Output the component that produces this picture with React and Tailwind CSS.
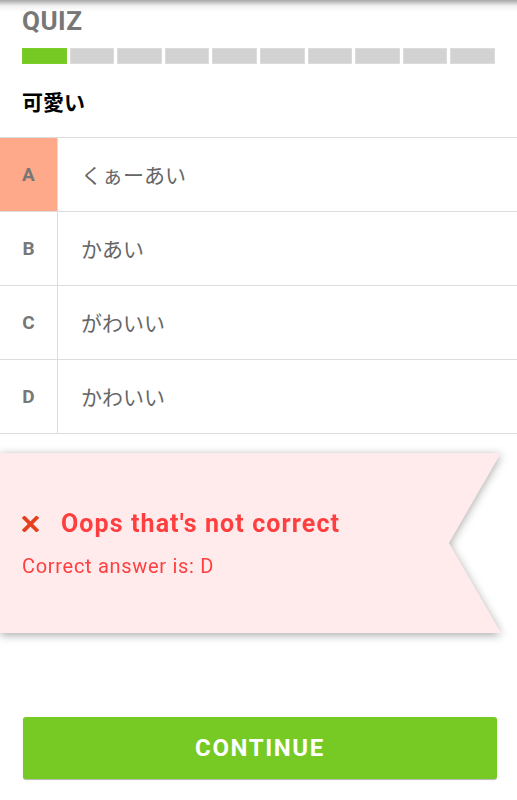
const segments = Array.from({ length: 10 }, (_, i) => i)

const answers = [
  { key: 'A', text: 'くぁーあい', picked: true },
  { key: 'B', text: 'かあい' },
  { key: 'C', text: 'がわいい' },
  { key: 'D', text: 'かわいい' },
]

const latin = { fontFamily: 'Roboto, "Noto Sans CJK JP", sans-serif' }
const jp = { fontFamily: '"Noto Sans CJK JP", Roboto, sans-serif' }

export default function App() {
  return (
    <div className="relative min-h-[800px] w-full overflow-hidden bg-white" style={latin}>
      {/* toolbar shadow on top edge */}
      <div className="pointer-events-none absolute inset-x-0 top-0 h-[12px] bg-gradient-to-b from-[#a8a8a8] via-[#f2f2f2] to-transparent" />

      <header className="px-[22px] pt-[8px]">
        <h1 className="text-[26px] font-bold leading-[26px] tracking-[0.5px] text-[#777777]">QUIZ</h1>
        <div className="mt-[14px] flex gap-[3px]">
          {segments.map((i) => (
            <div
              key={i}
              className={`h-[16px] w-[45px] border ${
                i === 0 ? 'border-[#7ccb2a] bg-[#76c922]' : 'border-[#dcdcdc] bg-[#d2d2d2]'
              }`}
            />
          ))}
        </div>
        <p className="mt-[27px] mb-[25px] text-[21px] font-bold leading-[21px] text-black" style={jp}>
          可愛い
        </p>
      </header>

      <ul className="border-t border-[#dddddd]">
        {answers.map((a) => (
          <li key={a.key} className="flex h-[74px] border-b border-[#dddddd]">
            <div
              className={`flex w-[58px] shrink-0 items-center justify-center border-r border-[#dddddd] pt-[2px] text-[19px] font-bold text-[#777777] ${
                a.picked ? 'bg-[#ffa98b]' : ''
              }`}
            >
              {a.key}
            </div>
            <div className="flex items-center pl-[23px] text-[21px] text-[#666666]" style={jp}>
              {a.text}
            </div>
          </li>
        ))}
      </ul>

      <div className="mt-[19px] w-[501px] drop-shadow-[0_2px_5px_rgba(0,0,0,0.35)]">
        <div className="h-[180px] bg-[#ffebeb] px-[22px] pt-[58px] [clip-path:polygon(0_0,100%_0,calc(100%-52px)_50%,100%_100%,0_100%)]">
          <div className="flex items-center">
            <svg width="17" height="16" viewBox="0 0 17 16" className="shrink-0">
              <path d="M2.5 2 L14.5 14 M14.5 2 L2.5 14" stroke="#e3401e" strokeWidth="3.8" strokeLinecap="square" />
            </svg>
            <span className="ml-[22px] text-[25px] font-bold leading-[25px] tracking-[1.1px] text-[#ff3f3f]">
              Oops that's not correct
            </span>
          </div>
          <p className="mt-[20px] text-[20px] leading-[20px] tracking-[0.7px] text-[#ff3f3f]">Correct answer is: D</p>
        </div>
      </div>

      <div className="mt-[84px] pl-[23px] pr-[20px]">
        <button className="flex h-[62px] w-full items-center justify-center rounded-[3px] bg-[#77c923] text-[24px] font-bold tracking-[1.6px] text-white shadow-[0_1px_1px_rgba(0,0,0,0.3)]">
          CONTINUE
        </button>
      </div>
    </div>
  )
}
